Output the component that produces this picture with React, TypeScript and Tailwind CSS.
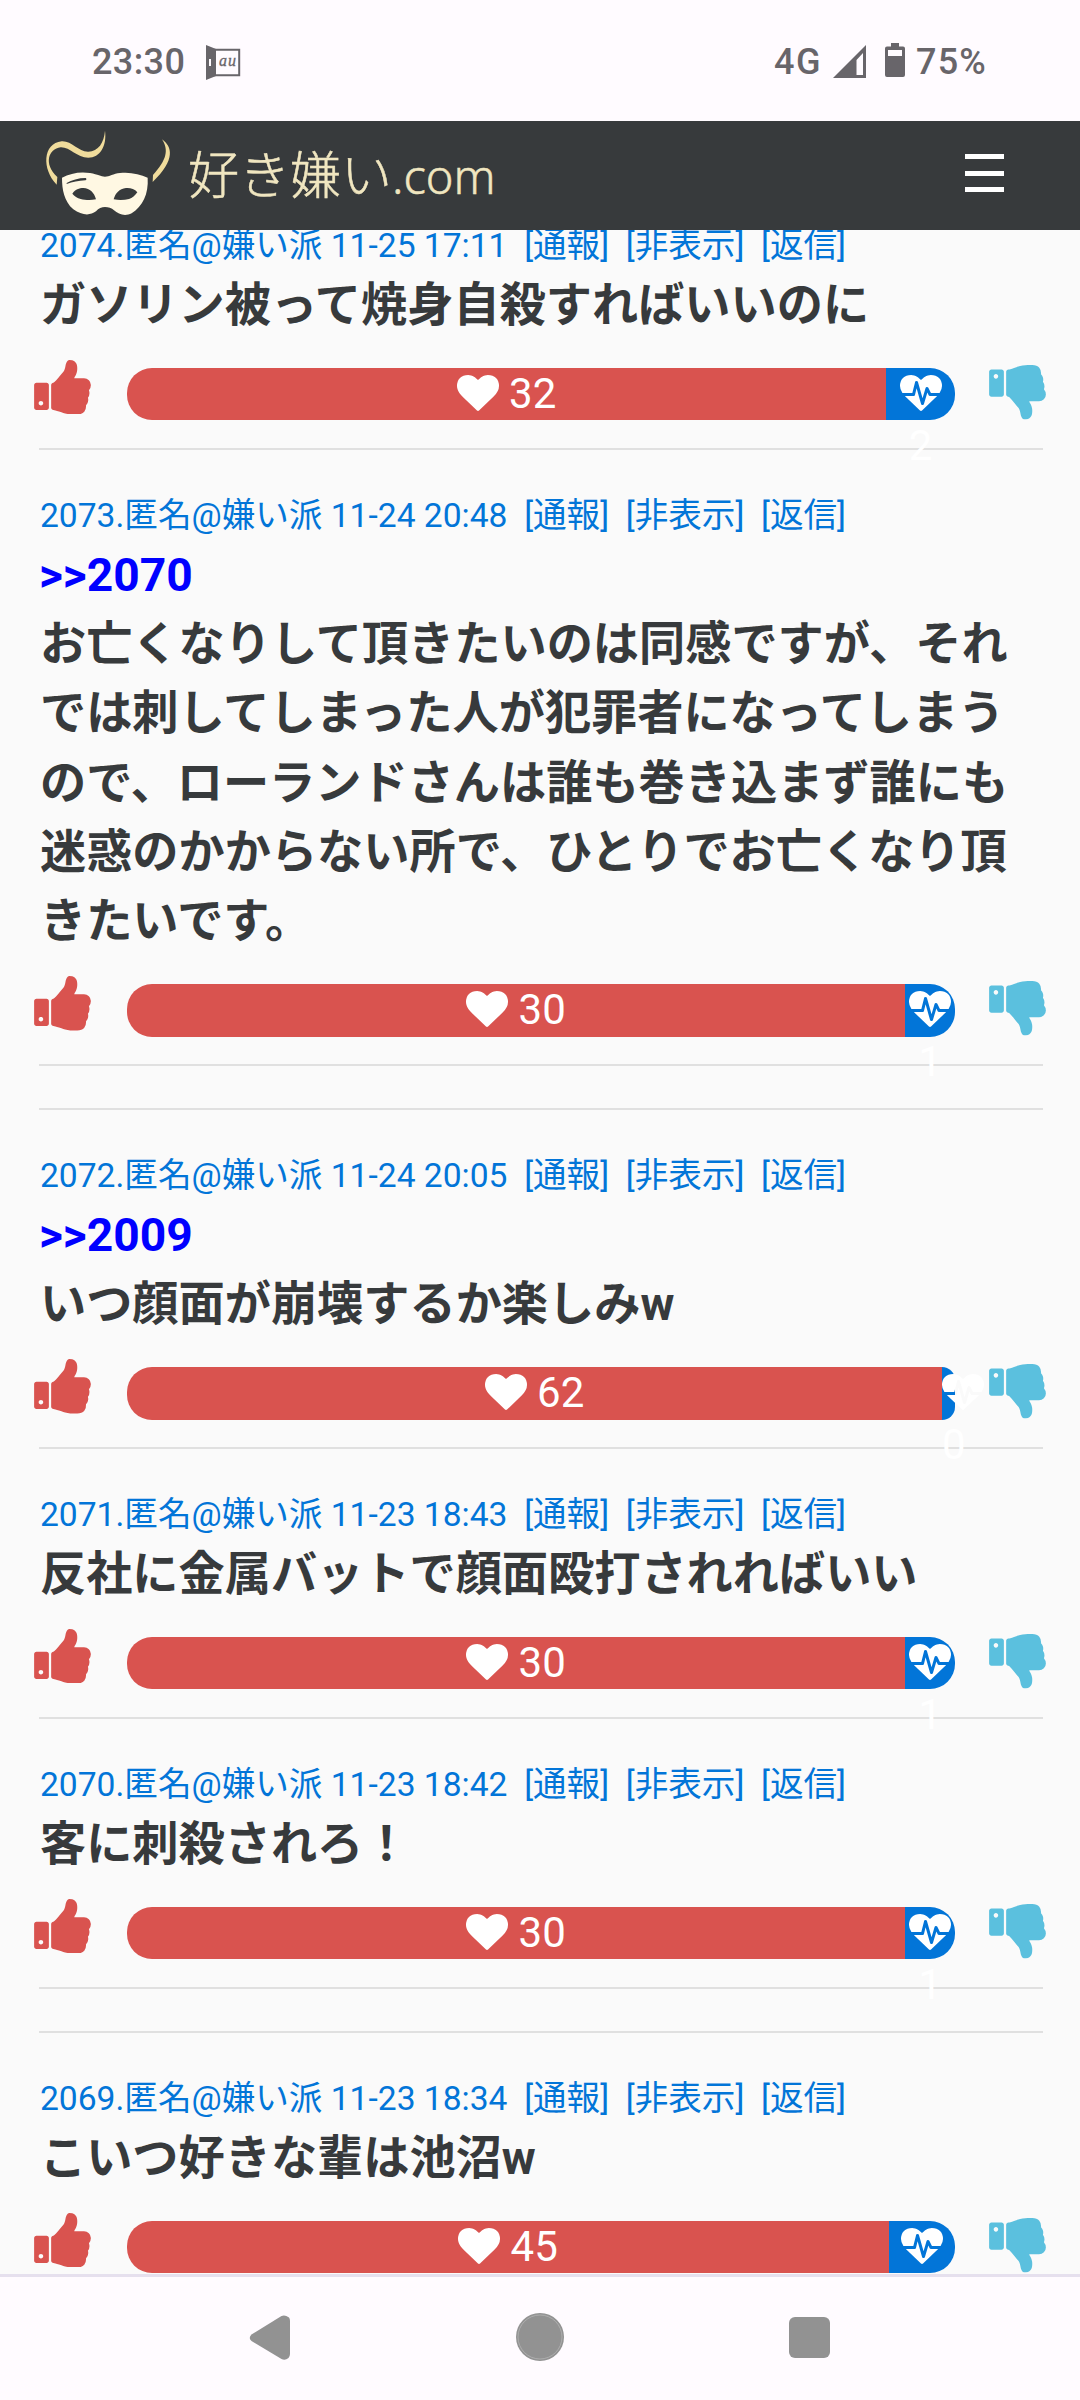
import {ReactNode} from "react";

interface Post {
    id: number;
    date: string;
    replyTo?: number;
    text: string;
    likes: number;
    dislikes: number;
    likeWidth: number;
    lastInThread?: boolean;
}

const BAR_WIDTH = 828;

const posts: Post[] = [
    {id: 2074, date: "11-25 17:11", text: "ガソリン被って焼身自殺すればいいのに", likes: 32, dislikes: 2, likeWidth: 759},
    {
        id: 2073,
        date: "11-24 20:48",
        replyTo: 2070,
        text: "お亡くなりして頂きたいのは同感ですが、それでは刺してしまった人が犯罪者になってしまうので、ローランドさんは誰も巻き込まず誰にも迷惑のかからない所で、ひとりでお亡くなり頂きたいです。",
        likes: 30,
        dislikes: 1,
        likeWidth: 778,
        lastInThread: true,
    },
    {id: 2072, date: "11-24 20:05", replyTo: 2009, text: "いつ顔面が崩壊するか楽しみw", likes: 62, dislikes: 0, likeWidth: 815},
    {id: 2071, date: "11-23 18:43", text: "反社に金属バットで顔面殴打されればいい", likes: 30, dislikes: 1, likeWidth: 778},
    {id: 2070, date: "11-23 18:42", text: "客に刺殺されろ！", likes: 30, dislikes: 1, likeWidth: 778, lastInThread: true},
    {id: 2069, date: "11-23 18:34", text: "こいつ好きな輩は池沼w", likes: 45, dislikes: 3, likeWidth: 762},
];

function StatusBar() {
    return (
        <div className="flex h-[121px] items-center justify-between bg-[#fffbff] pt-0.5 pr-[93px] pl-[92px] text-[36px] font-medium text-[#68656a]">
            <div className="flex items-center gap-5">
                <span className="w-[94px] whitespace-nowrap tracking-[0.400px]">23:30</span>
                <svg className="h-9 w-[35px]" viewBox="0 0 35 36">
                    <path d="M0 1l10 4v27l-10 4z" fill="#68656a" />
                    <path d="M9 5.8h24.2v25.4H9z" fill="none" stroke="#68656a" strokeWidth="2" />
                    <path d="M3 15h2v7H3z" fill="#fffbff" />
                    <text
                        fill="#68656a"
                        fontFamily="Liberation Serif, serif"
                        fontSize="16"
                        fontStyle="italic"
                        x="13"
                        y="22"
                        stroke="#68656a"
                        strokeWidth="0.3"
                        textLength="17"
                    >
                        au
                    </text>
                </svg>
            </div>
            <div className="flex items-center">
                <span className="tracking-[1.500px]">4G</span>
                <svg className="ml-[11px] h-[33px] w-[33px]" viewBox="0 0 33 33">
                    <path d="M33 0v33H0zM30 8l-6.500 7v15H30z" fill="#68656a" fillRule="evenodd" />
                </svg>
                <svg className="mb-1 ml-[19px] h-[34px] w-5" viewBox="0 0 20 34">
                    <path
                        d="M6 0h8v3.500h4a2 2 0 0 1 2 2V32a2 2 0 0 1-2 2H2a2 2 0 0 1-2-2V5.500a2 2 0 0 1 2-2h4zM3 7v6h14V7z"
                        fill="#68656a"
                        fillRule="evenodd"
                    />
                </svg>
                <span className="ml-[11px] tracking-[1.200px]">75%</span>
            </div>
        </div>
    );
}

function MaskLogo() {
    return (
        <svg className="h-[94px] w-[140px]" viewBox="0 0 420 282">
            <path
                d="M195 14C201 60 180 95 145 95C110 95 90 63 62 64C25 68 10 115 52 153L50 176C5 130 8 52 65 46C95 44 115 78 145 77C175 76 192 50 195 14z"
                fill="#f0dc9c"
            />
            <path d="M366 40C396 62 408 100 338 168L339 147C380 102 387 72 366 40z" fill="#f0dc9c" />
            <path
                d="M66 155C90 142 120 136 150 141C175 145 182 152 195 152C208 152 220 143 240 141C270 137 300 145 323 155C326 205 308 240 275 262C255 272 235 265 222 253C215 245 205 243 195 243C185 243 176 246 168 256C150 270 125 268 100 250C72 225 66 190 66 155z"
                fill="#fff8e3"
            />
            <path
                d="M97 203C105 190 118 186 130 186C150 187 163 200 168 220C150 224 135 222 122 219C112 216 103 211 97 203zM292 199C284 188 270 185 258 186C238 188 226 202 221 220C239 223 253 222 267 219C277 216 285 209 292 199z"
                fill="#373a3c"
            />
            <path d="M80 171C95 162 115 156 137 156C140 158 140 162 136 163C115 165 98 168 80 174z" fill="#373a3c" />
        </svg>
    );
}

function Header() {
    return (
        <header className="flex h-[109px] items-center justify-between bg-[#373a3c] pr-[76px] pb-[5px] pl-10">
            <div className="flex items-center">
                <MaskLogo />
                <div className="mt-0.5 ml-2 flex items-baseline font-['Noto_Sans','Noto_Sans_CJK_JP',sans-serif] leading-none font-light text-[#f0e6c0] [-webkit-text-stroke:0.5px_#f0e6c0]">
                    <span className="text-[51px]">好き嫌い</span>
                    <span className="text-[47px]">.com</span>
                </div>
            </div>
            <button className="flex w-[39px] flex-col gap-[11.500px]">
                <span className="h-[5px] bg-white" />
                <span className="h-[5px] bg-white" />
                <span className="h-[5px] bg-white" />
            </button>
        </header>
    );
}

function Thumb({className}: {className: string}) {
    return (
        <svg className={`h-[54.500px] w-[57px] shrink-0 ${className}`} fill="currentColor" viewBox="64 128 1600 1536">
            <path d="M320 1344q0-26-19-45t-45-19q-27 0-45.500 19t-18.500 45q0 27 18.500 45.500t45.500 18.500q26 0 45-18.500t19-45.500zm160-512v640q0 26-19 45t-45 19h-288q-26 0-45-19t-19-45v-640q0-26 19-45t45-19h288q26 0 45 19t19 45zm1184 0q0 86-55 149 15 44 15 76 3 76-43 137 17 56 0 117-15 57-54 94 9 112-49 181-64 76-197 78h-129q-66 0-144-15.500t-121.500-29-120.500-39.500q-123-43-158-44-26-1-45-19.500t-19-44.500v-641q0-25 18-43.500t43-20.500q24-2 76-59t101-121q68-87 101-120 18-18 31-48t17.500-48.500 13.500-60.500q7-39 12.500-61t19.500-52 34-50q19-19 45-19 46 0 82.500 10.500t60 26 40 40.500 24 45 12 50 5 45 .5 39q0 38-9.500 76t-19 60-27.500 56q-3 6-10 18t-11 22-8 24h277q78 0 135 57t57 135z" />
        </svg>
    );
}

function Heart({beat}: {beat?: boolean}) {
    return (
        <svg className="inline-block h-9 w-[42px] max-w-none align-[-3px]" fill="currentColor" viewBox="0 128 1792 1536">
            {beat ? (
                <path d="M1280 896h305q-5 6-10 10.500t-9 7.500l-3 4-623 600q-18 18-44 18t-44-18l-624-602q-5-2-21-20h369q22 0 39.500-13.500t22.500-34.500l70-281 190 667q6 20 23 33t39 13q21 0 38-13t23-33l146-485 56 112q18 35 57 35zm512-428q0 145-103 300h-369l-111-221q-8-17-25.500-27t-36.500-8q-45 5-56 46l-129 430-196-686q-6-20-23.500-33t-39.500-13-39 13.500-22 34.500l-116 464h-423q-103-155-103-300 0-220 127-344t351-124q62 0 126.500 21.500t120 58 95.500 68.500 76 68q36-36 76-68t95.500-68.500 120-58 126.500-21.500q224 0 351 124t127 344z" transform="translate(0 128)" />
            ) : (
                <path d="M896 1664q-26 0-44-18l-624-602q-10-8-27.500-26t-55.500-65.500-68-97.500-53.500-121-23.500-138q0-220 127-344t351-124q62 0 126.500 21.500t120 58 95.500 68.500 76 68q36-36 76-68t95.500-68.500 120-58 126.500-21.500q224 0 351 124t127 344q0 221-229 450l-623 600q-18 18-44 18z" />
            )}
        </svg>
    );
}

function VoteBar({post}: {post: Post}) {
    return (
        <div className="relative z-10 -mx-[5px] mt-[27.500px] flex h-[52.500px]">
            <Thumb className="-mt-2 text-[#d9534f]" />
            <div className="ml-9 flex w-[828px] text-center text-[42px] leading-[52px] text-white">
                <div className="rounded-l-[25px] bg-[#d9534f]" style={{width: post.likeWidth}}>
                    <Heart /> {post.likes}
                </div>
                <div className="rounded-r-[25px] bg-[#0275d8]" style={{width: BAR_WIDTH - post.likeWidth}}>
                    <Heart beat /> {post.dislikes}
                </div>
            </div>
            <Thumb className="-mt-[3px] ml-[34px] -scale-y-100 text-[#5bc0de]" />
        </div>
    );
}

function MetaLink({children}: {children: ReactNode}) {
    return <a className="cursor-pointer">[{children}]</a>;
}

function PostItem({post}: {post: Post}) {
    return (
        <article>
            <div className="pl-px text-[33.600px] leading-[50px] whitespace-pre text-[#0275d8]">
                {post.id}.匿名@嫌い派 {post.date}
                {"  "}
                <MetaLink>通報</MetaLink>
                {"  "}
                <MetaLink>非表示</MetaLink>
                {"  "}
                <MetaLink>返信</MetaLink>
            </div>
            <div className="pl-px text-[46.200px] leading-[69.300px] font-bold text-[#373a3c]">
                {post.replyTo && <a className="-ml-px block text-[#0000ff]">&gt;&gt;{post.replyTo}</a>}
                <p>{post.text}</p>
            </div>
            <VoteBar post={post} />
            <hr className="mt-[27.500px] mb-[41px] h-0.5 border-0 bg-[#e0e0e0]" />
            {post.lastInThread && <hr className="mt-[42px] mb-[41px] h-0.5 border-0 bg-[#e0e0e0]" />}
        </article>
    );
}

function NavigationBar() {
    return (
        <div className="flex h-[126px] items-start justify-between border-t-[3px] border-[#e6e0ee] bg-[#fffbff] px-[246px] pt-9 text-[#929292]">
            <svg className="h-12 w-12" fill="currentColor" viewBox="0 0 48 48">
                <path d="M5.500 21.500L35.500 3Q39 1.500 43 4.500Q44 5.500 44 8V41Q44 43 42.500 45Q39 48 35.500 46L5.500 28Q2 25 5.500 21.500z" />
            </svg>
            <svg className="mr-[3px] h-12 w-12" viewBox="0 0 48 48">
                <circle cx="24" cy="24" fill="currentColor" r="24" />
                <circle cx="24" cy="24" fill="none" r="22" stroke="#b4b4b4" strokeWidth="0.800" />
            </svg>
            <div className="mt-1 mr-1 h-[41px] w-[41px] rounded-md bg-[#929292]" />
        </div>
    );
}

export default function App() {
    return (
        <div className="flex h-[2400px] w-[1080px] flex-col overflow-hidden bg-[#fafafa] font-[Roboto,'Noto_Sans_CJK_JP',sans-serif]">
            <StatusBar />
            <Header />
            <main className="h-[2044px] overflow-hidden pr-[37px] pl-[39px]">
                <div className="-mt-[9px]">
                    {posts.map((post) => (
                        <PostItem key={post.id} post={post} />
                    ))}
                </div>
            </main>
            <NavigationBar />
        </div>
    );
}
